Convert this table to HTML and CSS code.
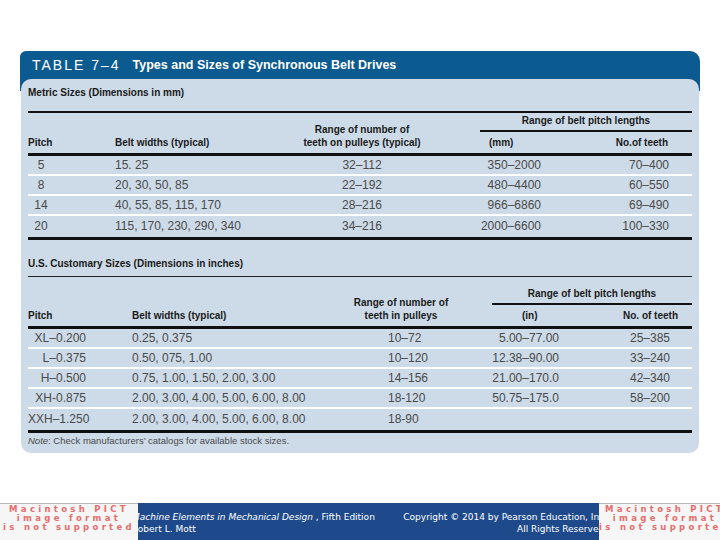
FILE: index.html
```html
<!DOCTYPE html>
<html>
<head>
<meta charset="utf-8">
<link rel="stylesheet" href="styles.css">
</head>
<body>
<div class="card">
  <div class="title"><span class="tno">TABLE 7–4</span><span class="tname">Types and Sizes of Synchronous Belt Drives</span></div>
  <div class="panel">
    <div class="sec sec-metric">Metric Sizes (Dimensions in mm)</div>
    <div class="thead metric">
      <div class="h">Pitch</div>
      <div class="h">Belt widths (typical)</div>
      <div class="h center">Range of number of<br>teeth on pulleys (typical)</div>
      <div class="grp grp-metric">
        <div class="grp-top">Range of belt pitch lengths</div>
        <div class="grp-bot"><span>(mm)</span><span>No.of teeth</span></div>
      </div>
    </div>
    <div class="row metric"><span class="mp">5</span><span>15. 25</span><span class="center">32–112</span><span class="right">350–2000</span><span class="right">70–400</span></div>
    <div class="row metric"><span class="mp">8</span><span>20, 30, 50, 85</span><span class="center">22–192</span><span class="right">480–4400</span><span class="right">60–550</span></div>
    <div class="row metric"><span class="mp">14</span><span>40, 55, 85, 115, 170</span><span class="center">28–216</span><span class="right">966–6860</span><span class="right">69–490</span></div>
    <div class="row metric last"><span class="mp">20</span><span>115, 170, 230, 290, 340</span><span class="center">34–216</span><span class="right">2000–6600</span><span class="right">100–330</span></div>

    <div class="sec sec-us">U.S. Customary Sizes (Dimensions in inches)</div>
    <div class="thead us">
      <div class="h">Pitch</div>
      <div class="h">Belt widths (typical)</div>
      <div class="h center">Range of number of<br>teeth in pulleys</div>
      <div class="grp grp-us">
        <div class="grp-top">Range of belt pitch lengths</div>
        <div class="grp-bot"><span>(in)</span><span>No. of teeth</span></div>
      </div>
    </div>
    <div class="row us"><span class="up">XL–0.200</span><span>0.25, 0.375</span><span class="ur">10–72</span><span class="right">5.00–77.00</span><span class="right">25–385</span></div>
    <div class="row us"><span class="up">L–0.375</span><span>0.50, 075, 1.00</span><span class="ur">10–120</span><span class="right">12.38–90.00</span><span class="right">33–240</span></div>
    <div class="row us"><span class="up">H–0.500</span><span>0.75, 1.00, 1.50, 2.00, 3.00</span><span class="ur">14–156</span><span class="right">21.00–170.0</span><span class="right">42–340</span></div>
    <div class="row us"><span class="up">XH-0.875</span><span>2.00, 3.00, 4.00, 5.00, 6.00, 8.00</span><span class="ur">18-120</span><span class="right">50.75–175.0</span><span class="right">58–200</span></div>
    <div class="row us last"><span class="up">XXH–1.250</span><span>2.00, 3.00, 4.00, 5.00, 6.00, 8.00</span><span class="ur">18-90</span><span></span><span></span></div>
    <div class="note"><i>Note</i>: Check manufacturers’ catalogs for available stock sizes.</div>
  </div>
</div>

<div class="footer">
  <div class="pict pict-left"><div class="pict-in">Macintosh PICT<br>image format<br>is not supported</div></div>
  <div class="fmid">
    <div class="fleft"><i>Machine Elements in Mechanical Design</i> , Fifth Edition<br>Robert L. Mott</div>
    <div class="fright">Copyright © 2014 by Pearson Education, Inc.<br>All Rights Reserved.</div>
  </div>
  <div class="pict pict-right"><div class="pict-in">Macintosh PICT<br>image format<br>is not supported</div></div>
</div>
</body>
</html>
```

FILE: styles.css
```css
* { box-sizing: border-box; }
html, body { margin: 0; padding: 0; }
body {
  width: 720px;
  height: 540px;
  overflow: hidden;
  background: #ffffff;
  display: flex;
  flex-direction: column;
  font-family: "Liberation Sans", Arial, sans-serif;
}

.card {
  margin: 51px 0 0 20px;
  width: 680px;
  background: linear-gradient(#0b5a90 0, #0b5a90 40px, transparent 40px);
  border-radius: 6px 10px 0 0;
}
.title {
  height: 28px;
  display: flex;
  align-items: center;
  padding-left: 12px;
  color: #ffffff;
}
.tno {
  font-size: 14px;
  letter-spacing: 2px;
  margin-right: 12px;
}
.tname {
  font-size: 12.5px;
  font-weight: bold;
}

.panel {
  margin: 0 1px;
  background: #cddae8;
  border-radius: 10px;
  padding: 0 7px 6px 7px;
}

.sec {
  font-size: 10px;
  font-weight: bold;
  color: #1a1a1a;
  line-height: 13px;
}
.sec-metric {
  padding: 7px 0 12px 0;
  border-bottom: 2px solid #111;
}
.sec-us {
  padding: 17px 0 6px 0;
  border-bottom: 1px solid #222;
}

.thead, .row {
  display: grid;
}
.metric { grid-template-columns: 87px 183px 128px 115px 128px 23px; }
.us { grid-template-columns: 104px 196px 146px 85px 111px 22px; }

.thead {
  align-items: end;
  padding-bottom: 4px;
  border-bottom: 3px solid #111;
  font-size: 10px;
  font-weight: bold;
  color: #1a1a1a;
  line-height: 13px;
}
.thead.metric { padding-top: 1px; }
.thead.us { padding-top: 10px; }
.grp { grid-column: 4 / 7; }
.grp-metric { margin-left: 54px; }
.grp-us { margin-left: 18px; }
.grp-top {
  text-align: center;
  padding-bottom: 3px;
  border-bottom: 2px solid #111;
}
.grp-bot {
  display: flex;
  justify-content: space-between;
  margin-top: 4px;
}
.grp-metric .grp-bot { padding: 0 24px 0 9px; }
.grp-us .grp-bot { padding: 0 14px 0 30px; }

.center { text-align: center; }
.right { text-align: right; }

.row {
  height: 20px;
  border-bottom: 2px solid #ffffff;
  align-items: center;
  font-size: 12px;
  color: #4a4a4a;
  white-space: nowrap;
}
.row.last {
  height: 24px;
  border-bottom: 3px solid #111;
  padding-bottom: 2px;
}
.mp { width: 26px; text-align: center; }
.up { text-align: right; padding-right: 46px; }
.ur { padding-left: 60px; }

.note {
  font-size: 9.5px;
  color: #4a4a4a;
  line-height: 13px;
  padding-top: 1px;
}

.footer {
  margin-top: auto;
  height: 37px;
  display: flex;
  background: #1e4a8b;
}
.pict {
  position: relative;
  z-index: 1;
  background: #f6f6f6;
  border-top: 1px solid #b8b8b8;
  overflow: hidden;
  display: flex;
  justify-content: center;
}
.pict-left { width: 138px; }
.pict-right { width: 121px; justify-content: flex-start; }
.pict-in {
  flex: none;
  width: 160px;
  margin-left: -14px;
  text-align: center;
  font-family: "DejaVu Sans", Verdana, sans-serif;
  font-size: 8.5px;
  line-height: 9px;
  font-weight: bold;
  letter-spacing: 3.3px;
  color: #e76d6d;
  padding-top: 1px;
}
.pict-left .pict-in { margin-left: 0; }
.fmid {
  flex: 1;
  display: flex;
  justify-content: space-between;
  align-items: flex-start;
  padding-top: 8px;
  color: #ffffff;
  font-family: "DejaVu Sans", Verdana, sans-serif;
  font-size: 9px;
  line-height: 12px;
}
.fleft { margin-left: -6px; white-space: nowrap; }
.fright { margin-right: -8px; text-align: right; white-space: nowrap; }
```
